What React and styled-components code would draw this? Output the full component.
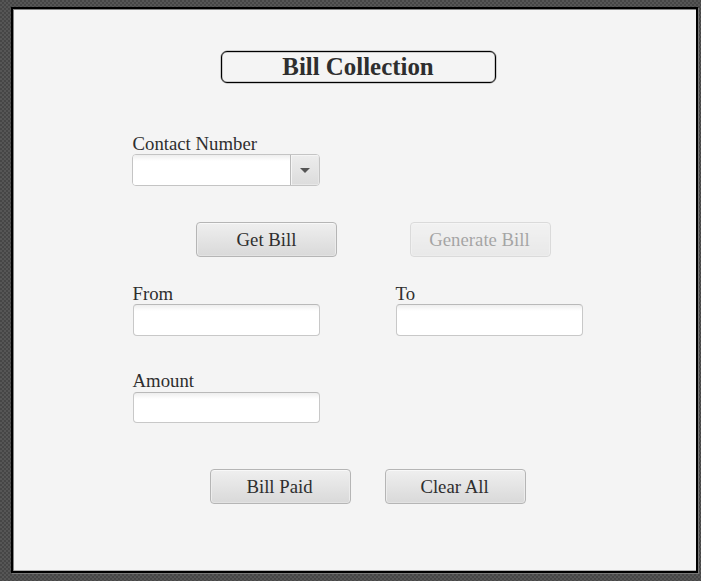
import React from "react";
import styled, { createGlobalStyle } from "styled-components";

const GlobalStyle = createGlobalStyle`
  *, *::before, *::after { box-sizing: border-box; }
  body {
    margin: 0;
    font-family: "Liberation Serif", "Times New Roman", serif;
    color: #2e2e2e;
  }
`;

const Desktop = styled.div`
  width: 701px;
  height: 581px;
  padding: 7px 3px 8px 11px;
  overflow: hidden;
  background: conic-gradient(#565656 25%, #464646 0 50%, #565656 0 75%, #464646 0) 0 0 / 4px 4px;
`;

const Window = styled.main`
  width: 687px;
  height: 566px;
  border: 2px solid #000;
  padding: 42px 0 0 119px;
  background: #f4f4f4;
  box-shadow: inset 1px 1px #858585, inset 0 -1px #b0b0b0, 1px 1px #777;
`;

const Title = styled.h1`
  width: 275px;
  height: 32px;
  margin: 0 0 0 89px;
  padding-right: 1px;
  border: 1px solid #000;
  border-radius: 6px;
  box-shadow: 0 0 0 0.5px rgba(0, 0, 0, 0.35), inset 0 0 0 0.5px rgba(0, 0, 0, 0.35);
  font-size: 24.9px;
  line-height: 30px;
  text-align: center;
`;

const Row = styled.div`
  display: flex;
  margin-top: ${(p) => p.$top}px;
  padding-left: ${(p) => p.$indent || 0}px;
  gap: ${(p) => p.$gap || 0}px;
`;

const Field = styled.label`
  display: flex;
  flex-direction: column;
  width: 188px;
  font-size: 18.75px;
  line-height: 20px;
`;

const Caption = styled.span`
  height: ${(p) => p.$height || 20}px;
  padding-left: 0.5px;
  white-space: nowrap;
`;

const Input = styled.input`
  width: 187px;
  height: ${(p) => p.$height || 32}px;
  margin: 0 0 0 1px;
  padding: 4px 8px;
  border: 1px solid #c8c8c8;
  border-top-color: #b9b9b9;
  border-radius: 4px;
  background: linear-gradient(#eee, #fff 6px);
  font: inherit;
  color: inherit;
  outline: none;
`;

const Combo = styled.div`
  display: flex;
  width: 188px;
  height: 32px;
  border: 1px solid #c4c4c4;
  border-radius: 4px;
  overflow: hidden;
  background: #fff;
`;

const ComboInput = styled.input`
  flex: 1;
  min-width: 0;
  margin: 0;
  padding: 4px 8px;
  border: 0;
  background: linear-gradient(#eee, #fff 6px);
  font: inherit;
  outline: none;
`;

const Arrow = styled.button`
  display: flex;
  align-items: center;
  justify-content: center;
  width: 29px;
  margin: 0;
  padding: 0;
  border: 0;
  border-left: 1px solid #bababa;
  background: linear-gradient(#ededed, #dcdcdc);
  box-shadow: inset 1px 1px #f5f5f5, inset -1px -1px #e7e7e7;
`;

const Button = styled.button`
  width: 141px;
  height: 35px;
  margin: 0;
  padding: 0 ${(p) => p.$shift || 0}px 0 0;
  border: 1px solid #b5b5b5;
  border-radius: 4px;
  background: linear-gradient(#efefef, #d9d9d9);
  box-shadow: inset 0 1px #f8f8f8, inset 1px 0 #ececec, inset -1px 0 #ececec, inset 0 -1px #e2e2e2;
  font-family: inherit;
  font-size: 18.75px;
  line-height: 33px;
  color: #2e2e2e;

  &:disabled { opacity: 0.4; }
`;

function TextField({ label, captionHeight, inputHeight }) {
  return (
    <Field>
      <Caption $height={captionHeight}>{label}</Caption>
      <Input $height={inputHeight} />
    </Field>
  );
}

export default function App() {
  return (
    <>
      <GlobalStyle />
      <Desktop>
        <Window>
          <Title>Bill Collection</Title>
          <Row $top={51}>
            <Field as="div">
              <Caption>Contact Number</Caption>
              <Combo>
                <ComboInput aria-label="Contact Number" />
                <Arrow aria-label="Show numbers">
                  <svg width="10" height="5" viewBox="0 0 10 5">
                    <path d="M0 0H10L5 5Z" fill="#555" />
                  </svg>
                </Arrow>
              </Combo>
            </Field>
          </Row>
          <Row $top={36} $indent={64} $gap={73}>
            <Button>Get Bill</Button>
            <Button $shift={2} disabled>Generate Bill</Button>
          </Row>
          <Row $top={27} $gap={75}>
            <TextField label="From" />
            <TextField label="To" />
          </Row>
          <Row $top={35}>
            <TextField label="Amount" captionHeight={21} inputHeight={31} />
          </Row>
          <Row $top={46} $indent={78} $gap={34}>
            <Button $shift={2}>Bill Paid</Button>
            <Button $shift={2}>Clear All</Button>
          </Row>
        </Window>
      </Desktop>
    </>
  );
}
